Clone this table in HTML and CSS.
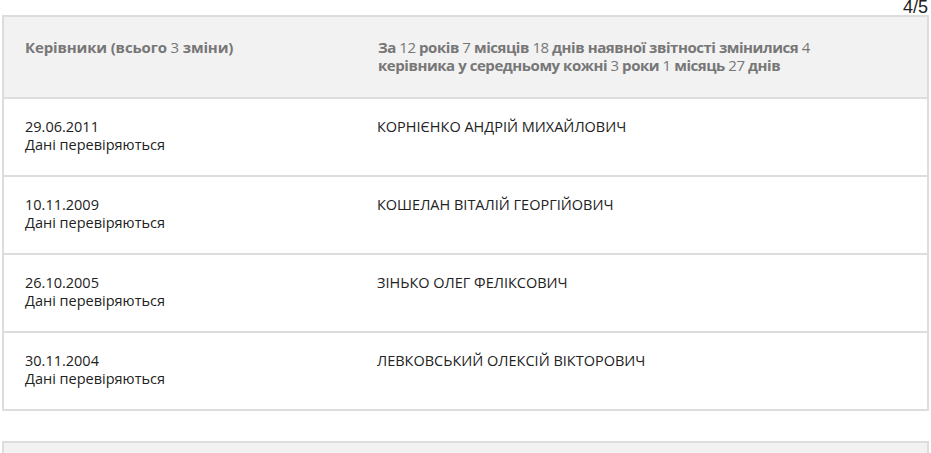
FILE: index.html
```html
<!DOCTYPE html>
<html lang="uk">
<head>
<meta charset="utf-8">
<link rel="stylesheet" href="styles.css">
</head>
<body>
<div class="pager">4/5</div>
<div class="table">
  <div class="row head">
    <div class="cell">Керівники (всього <span class="n">3</span> зміни)</div>
    <div class="cell summary">За <span class="n">12</span> років <span class="n">7</span> місяців <span class="n">18</span> днів наявної звітності змінилися <span class="n">4</span><br>керівника у середньому кожні <span class="n">3</span> роки <span class="n">1</span> місяць <span class="n">27</span> днів</div>
  </div>
  <div class="row">
    <div class="cell">29.06.2011<br>Дані перевіряються</div>
    <div class="cell">КОРНІЄНКО АНДРІЙ МИХАЙЛОВИЧ</div>
  </div>
  <div class="row">
    <div class="cell">10.11.2009<br>Дані перевіряються</div>
    <div class="cell">КОШЕЛАН ВІТАЛІЙ ГЕОРГІЙОВИЧ</div>
  </div>
  <div class="row">
    <div class="cell">26.10.2005<br>Дані перевіряються</div>
    <div class="cell">ЗІНЬКО ОЛЕГ ФЕЛІКСОВИЧ</div>
  </div>
  <div class="row">
    <div class="cell">30.11.2004<br>Дані перевіряються</div>
    <div class="cell">ЛЕВКОВСЬКИЙ ОЛЕКСІЙ ВІКТОРОВИЧ</div>
  </div>
</div>
<div class="table next"></div>
</body>
</html>
```
FILE: styles.css
```css
html, body {
  margin: 0;
  padding: 0;
  background: #fff;
}
body {
  font-family: "Open Sans", "DejaVu Sans", sans-serif;
  font-size: 14.5px;
  color: #222;
  overflow: hidden;
}
.pager {
  font-family: "Liberation Sans", Arial, sans-serif;
  font-size: 18px;
  line-height: 14px;
  height: 15px;
  text-align: right;
  padding-right: 3px;
  color: #222;
}
.table {
  margin-left: 2px;
  width: 923px;
  border: 2px solid #ddd;
}
.row {
  display: grid;
  grid-template-columns: 353px 1fr;
  padding: 19px 21px 21px 21px;
  line-height: 18px;
  height: 36px;
  border-top: 2px solid #ddd;
}
.row .cell:last-child {
  margin-left: -1px;
}
.row.head {
  border-top: none;
  background: #f2f2f2;
  color: #777;
  font-weight: 700;
  font-size: 15px;
  line-height: 18px;
  padding: 21px 21px 23px;
  letter-spacing: -0.15px;
}
.row.head .cell.summary {
  margin-left: 0;
  letter-spacing: -0.45px;
}
.row.head .n {
  font-weight: 400;
}
.next {
  margin-top: 30px;
  height: 40px;
  background: #f2f2f2;
}
```
